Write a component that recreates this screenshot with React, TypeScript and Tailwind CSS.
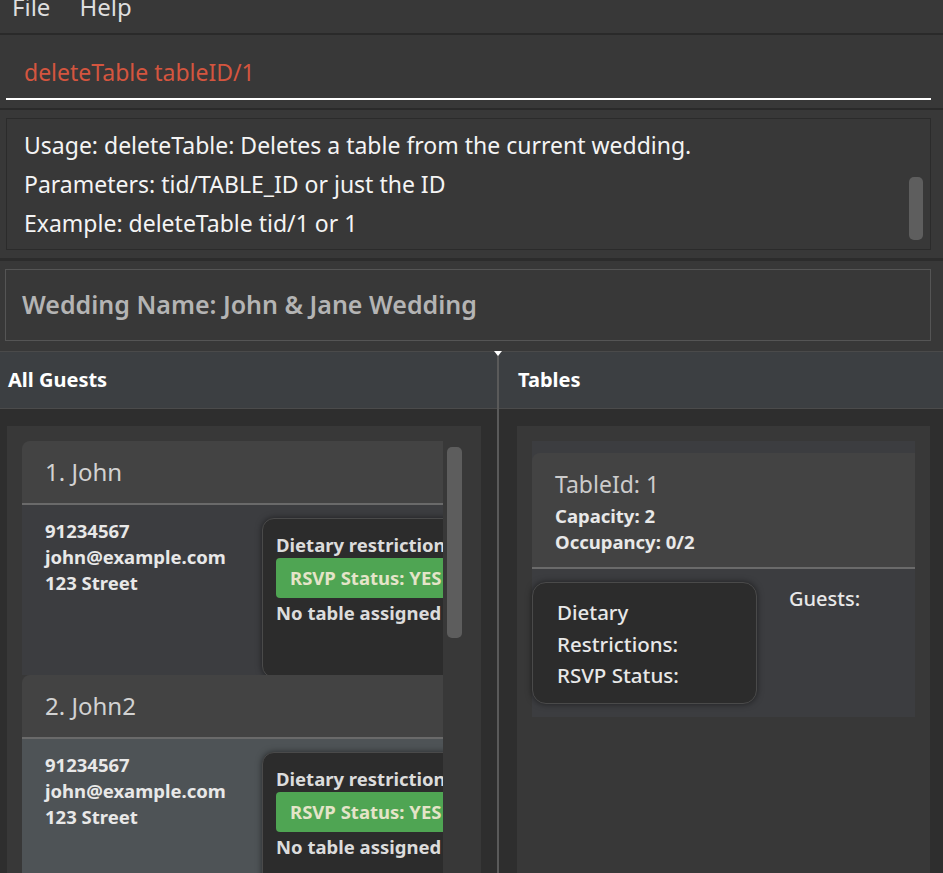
import React from "react";

const font = { fontFamily: '"Noto Sans", "Open Sans", sans-serif' };

function GuestCard({ idx, name, bodyBg }: { idx: number; name: string; bodyBg: string }) {
  return (
    <div className="w-[560px] flex flex-col">
      <div className="h-[62px] bg-[#434343] rounded-tl-[8px] flex items-center pl-[23px] text-[24px] text-[#d2d2d2]">
        {idx}. {name}
      </div>
      <div className="h-[2px] bg-[#6a6a6a]" />
      <div className={`h-[170px] flex ${bodyBg}`}>
        <div className="w-[240px] shrink-0 pl-[23px] pt-[13px] flex flex-col text-[18.5px] leading-[26px] font-bold text-[#e8e8e8]">
          <span>91234567</span>
          <span>john@example.com</span>
          <span>123 Street</span>
        </div>
        <div className="mt-[13px] w-[300px] h-[160px] bg-[#2c2c2c] border border-[#4a4a4a] rounded-[12px] shadow-[0_0_6px_rgba(0,0,0,0.5)] pl-[13px] pt-[13px] flex flex-col text-[18.5px] font-bold text-[#dcdcdc]">
          <span className="leading-[26px] whitespace-nowrap">Dietary restrictions: None</span>
          <div className="h-[40px] bg-[#4fa553] rounded-[4px] flex items-center pl-[14px] text-[#e4e4c8] whitespace-nowrap">
            RSVP Status: YES
          </div>
          <span className="leading-[30px] whitespace-nowrap">No table assigned</span>
        </div>
      </div>
    </div>
  );
}

export default function App() {
  return (
    <div className="w-[943px] h-[873px] overflow-hidden bg-[#383838] flex flex-col" style={font}>
      {/* Menu bar */}
      <div className="h-[33px] shrink-0 flex items-start pl-[12px] gap-[29px] text-[24px] text-[#dedede] overflow-hidden">
        <span className="-mt-[9px] leading-[32px]">File</span>
        <span className="-mt-[9px] leading-[32px]">Help</span>
      </div>
      <div className="h-[2px] shrink-0 bg-[#2a2a2a]" />
      {/* Command box */}
      <div className="h-[73px] shrink-0 px-[6px] pr-[12px]">
        <div className="h-[65px] border-b-2 border-white flex items-center pl-[18px] pt-[12px] text-[23px] text-[#d4553f]">
          deleteTable tableID/1
        </div>
      </div>
      <div className="h-[2px] shrink-0 bg-[#2a2a2a]" />
      {/* Result display */}
      <div className="h-[148px] shrink-0 pt-[8px] pl-[6px] pr-[12px]">
        <div className="h-[132px] border border-[#2b2b2b] flex">
          <div className="flex-1 pl-[17px] pt-[7px] flex flex-col text-[23px] leading-[39px] text-[#f4f4f4]">
            <span>Usage: deleteTable: Deletes a table from the current wedding.</span>
            <span>Parameters: tid/TABLE_ID or just the ID</span>
            <span>Example: deleteTable tid/1 or 1</span>
          </div>
          <div className="w-[21px] flex justify-start pt-[58px]">
            <div className="w-[14px] h-[63px] rounded-[5px] bg-[#5e5e5e]" />
          </div>
        </div>
      </div>
      <div className="h-[3px] shrink-0 bg-[#2c2c2c]" />
      {/* Wedding name */}
      <div className="h-[90px] shrink-0 pt-[8px] pl-[5px] pr-[12px]">
        <div className="h-[72px] border border-[#555555] flex items-center pl-[16px] text-[25px] font-semibold text-[#b4b4b4]">
          Wedding Name: John &amp; Jane Wedding
        </div>
      </div>
      {/* Split panes */}
      <div className="flex-1 flex border-t border-[#4a4a4a] min-h-0">
        {/* Left */}
        <div className="w-[497px] flex flex-col">
          <div className="h-[57px] shrink-0 bg-[#3c3f42] border-b border-[#4b4b4b] flex items-center pl-[8px] text-[20px] font-bold text-white">
            All Guests
          </div>
          <div className="flex-1 bg-[#2e2e2e] pt-[17px] pl-[7px] min-h-0">
            <div className="w-[474px] h-full bg-[#383838] pt-[15px] pl-[15px] flex gap-[4px]">
              <div className="w-[421px] overflow-hidden flex flex-col">
                <GuestCard idx={1} name="John" bodyBg="bg-[#3c3d40]" />
                <GuestCard idx={2} name="John2" bodyBg="bg-[#4e5356]" />
              </div>
              <div className="mt-[6px] w-[15px] h-[191px] rounded-[5px] bg-[#5d5d5d]" />
            </div>
          </div>
        </div>
        {/* Divider */}
        <div className="w-[2px] bg-[#5a5a5a] relative">
          <div className="absolute -top-[1px] -left-[3px] w-0 h-0 border-l-[4px] border-r-[4px] border-t-[5px] border-l-transparent border-r-transparent border-t-white" />
        </div>
        {/* Right */}
        <div className="flex-1 flex flex-col">
          <div className="h-[57px] shrink-0 bg-[#3c3f42] border-b border-[#4b4b4b] flex items-center pl-[19px] text-[20px] font-bold text-white">
            Tables
          </div>
          <div className="flex-1 bg-[#2e2e2e] pt-[17px] pl-[18px] pr-[13px] min-h-0">
            <div className="h-full bg-[#383838] pt-[15px] pl-[15px] pr-[15px]">
              <div className="h-[276px] bg-[#3c3d40] pt-[12px] flex flex-col">
                <div className="h-[114px] bg-[#434343] rounded-tl-[8px] pl-[23px] pt-[12px] flex flex-col">
                  <span className="text-[23px] leading-[38px] text-[#cccccc]">TableId: 1</span>
                  <span className="text-[18.5px] leading-[26px] font-bold text-[#e8e8e8]">Capacity: 2</span>
                  <span className="text-[18.5px] leading-[26px] font-bold text-[#e8e8e8]">Occupancy: 0/2</span>
                </div>
                <div className="h-[2px] bg-[#6a6a6a]" />
                <div className="flex pt-[13px]">
                  <div className="w-[225px] h-[122px] bg-[#2c2c2c] border border-[#4a4a4a] rounded-[14px] shadow-[0_0_6px_rgba(0,0,0,0.5)] pl-[24px] pt-[14px] flex flex-col text-[20.5px] leading-[31.5px] font-medium text-[#e8e8e8]">
                    <span>Dietary</span>
                    <span>Restrictions:</span>
                    <span>RSVP Status:</span>
                  </div>
                  <div className="pl-[32px] pt-[1px] text-[20px] leading-[31px] font-medium text-[#e8e8e8]">Guests:</div>
                </div>
              </div>
            </div>
          </div>
        </div>
      </div>
    </div>
  );
}
